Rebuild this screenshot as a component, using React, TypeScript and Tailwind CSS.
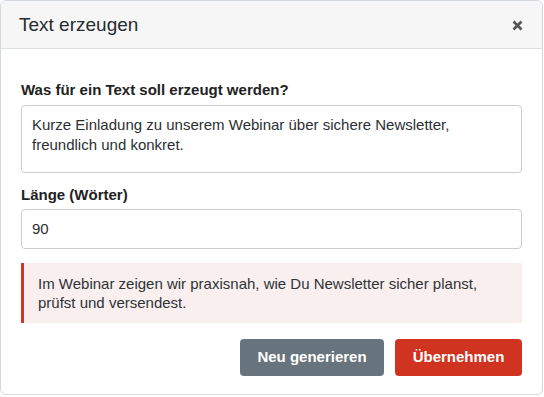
import React from "react";

export default function App() {
  return (
    <div className="w-[544px] h-[397px] bg-white" style={{ fontFamily: '"Liberation Sans", Arial, sans-serif' }}>
      <div className="w-[543px] h-[395px] border border-[#d3d9df] rounded-[6px] overflow-hidden flex flex-col bg-white">
        <div className="h-[48px] shrink-0 bg-[#f6f6f6] border-b border-[#dcdfe3] flex items-center justify-between pl-[18px] pr-[19px]">
          <span className="text-[19px] text-[#262b31] leading-none">Text erzeugen</span>
          <svg width="11" height="11" viewBox="0 0 11 11" className="mt-[1px]">
            <path d="M1.5 1.5 L9.5 9.5 M9.5 1.5 L1.5 9.5" stroke="#555" strokeWidth="2.6" strokeLinecap="butt" />
          </svg>
        </div>
        <div className="flex flex-col px-[20px] pt-[31px]">
          <label className="text-[15px] font-bold text-[#222] leading-[20px]">Was für ein Text soll erzeugt werden?</label>
          <div className="mt-[5px] h-[68px] border border-[#c8cdd2] rounded-[4px] px-[10px] pt-[9px] text-[15px] leading-[20px] text-[#2b2f33]">
            Kurze Einladung zu unserem Webinar über sichere Newsletter,<br />freundlich und konkret.
          </div>
          <label className="mt-[12px] text-[15px] font-bold text-[#222] leading-[20px]">Länge (Wörter)</label>
          <div className="mt-[4px] h-[40px] border border-[#c8cdd2] rounded-[4px] px-[10px] flex items-center text-[15px] text-[#2b2f33]">
            90
          </div>
          <div className="mt-[14px] h-[60px] bg-[#f9efef] border-l-[3px] border-[#d0352b] pl-[14px] flex flex-col justify-center text-[15px] leading-[19px] text-[#2f3337]">
            <span>Im Webinar zeigen wir praxisnah, wie Du Newsletter sicher planst,</span>
            <span>prüfst und versendest.</span>
          </div>
          <div className="mt-[16px] flex justify-end gap-[11px]">
            <button className="w-[144px] h-[37px] rounded-[4px] bg-[#68747d] text-white font-bold text-[15px]">Neu generieren</button>
            <button className="w-[127px] h-[37px] rounded-[4px] bg-[#d03320] text-white font-bold text-[15px]">Übernehmen</button>
          </div>
        </div>
      </div>
    </div>
  );
}
